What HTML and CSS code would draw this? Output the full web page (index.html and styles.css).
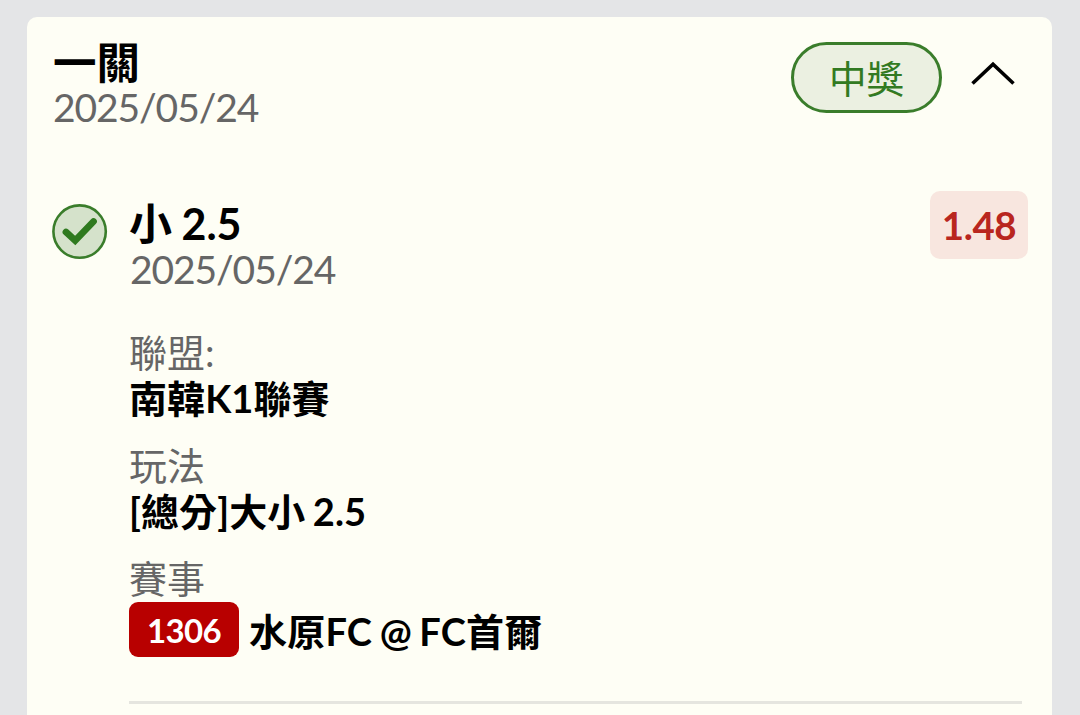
FILE: index.html
```html
<!DOCTYPE html>
<html lang="zh-Hant">
<head>
    <meta charset="UTF-8">
    <meta name="viewport" content="width=device-width, initial-scale=1.0">
    <title>投注紀錄</title>
    <link rel="stylesheet" href="styles.css">
</head>
<body>
    <div class="card">
        <div class="header">
            <div class="header-text">
                <div class="title">一關</div>
                <div class="date">2025/05/24</div>
            </div>
            <div class="status">中獎</div>
            <svg class="arrow" width="44" height="26" viewBox="0 0 44 26">
                <path d="M1.5 23.5 L22 4.2 L42.5 23.5" fill="none" stroke="#000" stroke-width="3.6"/>
            </svg>
        </div>

        <div class="bet">
            <svg class="check" width="56" height="56" viewBox="0 0 56 56">
                <circle cx="27.6" cy="27.6" r="26.2" fill="#d5e2cb" stroke="#3a7d2b" stroke-width="2.6"/>
                <path d="M14 28 L23.2 36.5 L41.5 17.5" fill="none" stroke="#2f7a1f" stroke-width="6.8" stroke-linecap="round"/>
            </svg>
            <div class="bet-body">
                <div class="pick">小 2.5</div>
                <div class="date">2025/05/24</div>
                <!-- 投注內容 -->
                <div class="info">
                    <div class="label">聯盟:</div>
                    <div class="value">南韓K1聯賽</div>
                    <div class="label">玩法</div>
                    <div class="value">[總分]大小 2.5</div>
                    <div class="label">賽事</div>
                    <div class="match">
                        <span class="code">1306</span>
                        <span class="teams">水原FC @ FC首爾</span>
                    </div>
                </div>
            </div>
            <div class="odds">1.48</div>
        </div>
    </div>
</body>
</html>
```

FILE: styles.css
```css
*{
    box-sizing: border-box;
}
body{
    margin: 0;
    height: 715px;
    overflow: hidden;
    padding: 17px 28px 0 27px;
    background-color: #e4e5e7;
    font-family: Lato, "Noto Sans CJK TC", sans-serif;
    color: #000;
}
.card{
    height: 720px;
    padding: 20px 24px 0 25px;
    border-radius: 10px;
    background-color: #fefef5;
}
.header{
    display: flex;
    align-items: flex-start;
    height: 153px;
}
.header-text{
    flex: 1;
    padding-left: 1px;
}
.title{
    font-size: 43.5px;
    font-weight: bold;
    line-height: 50px;
}
.date{
    font-size: 39px;
    line-height: 40px;
    letter-spacing: -1.1px;
    color: #666;
}
.status{
    width: 151px;
    height: 71px;
    margin-top: 5px;
    border: 3px solid #3a7d2b;
    border-radius: 36px;
    background-color: #ebf0e1;
    color: #327a22;
    font-size: 37.5px;
    line-height: 68px;
    text-align: center;
}
.arrow{
    margin: 23px 13px 0 29px;
}
.bet{
    display: flex;
    align-items: flex-start;
}
.check{
    margin: 14px 21px 0 0;
}
.bet-body{
    flex: 1;
    padding-top: 8px;
}
.pick{
    font-size: 43px;
    font-weight: bold;
    line-height: 52px;
    word-spacing: -1px;
}
.bet-body .date{
    padding-left: 1px;
    line-height: 38px;
}
.info{
    margin-right: -92px;
    padding: 41px 0 44px;
    border-bottom: 3px solid #e5e5df;
}
.label{
    font-size: 38px;
    line-height: 46px;
    color: #666;
}
.value{
    margin-bottom: 20px;
    font-size: 38px;
    line-height: 47px;
    letter-spacing: 0.1px;
    font-weight: bold;
    word-spacing: -2px;
}
.match{
    display: flex;
    align-items: center;
    gap: 10px;
    height: 55px;
    margin-top: 1px;
    font-size: 38px;
    font-weight: bold;
}
.teams{
    letter-spacing: 0.2px;
    word-spacing: -2px;
}
.code{
    width: 110px;
    height: 55px;
    border-radius: 9px;
    background-color: #b80000;
    color: #fff;
    font-size: 33px;
    line-height: 56px;
    letter-spacing: -0.6px;
    text-align: center;
}
.odds{
    width: 98px;
    height: 68px;
    margin-top: 1px;
    border-radius: 10px;
    background-color: #f8e6df;
    color: #b9261f;
    font-size: 38.5px;
    font-weight: bold;
    line-height: 69px;
    letter-spacing: -0.4px;
    text-align: center;
}
```
